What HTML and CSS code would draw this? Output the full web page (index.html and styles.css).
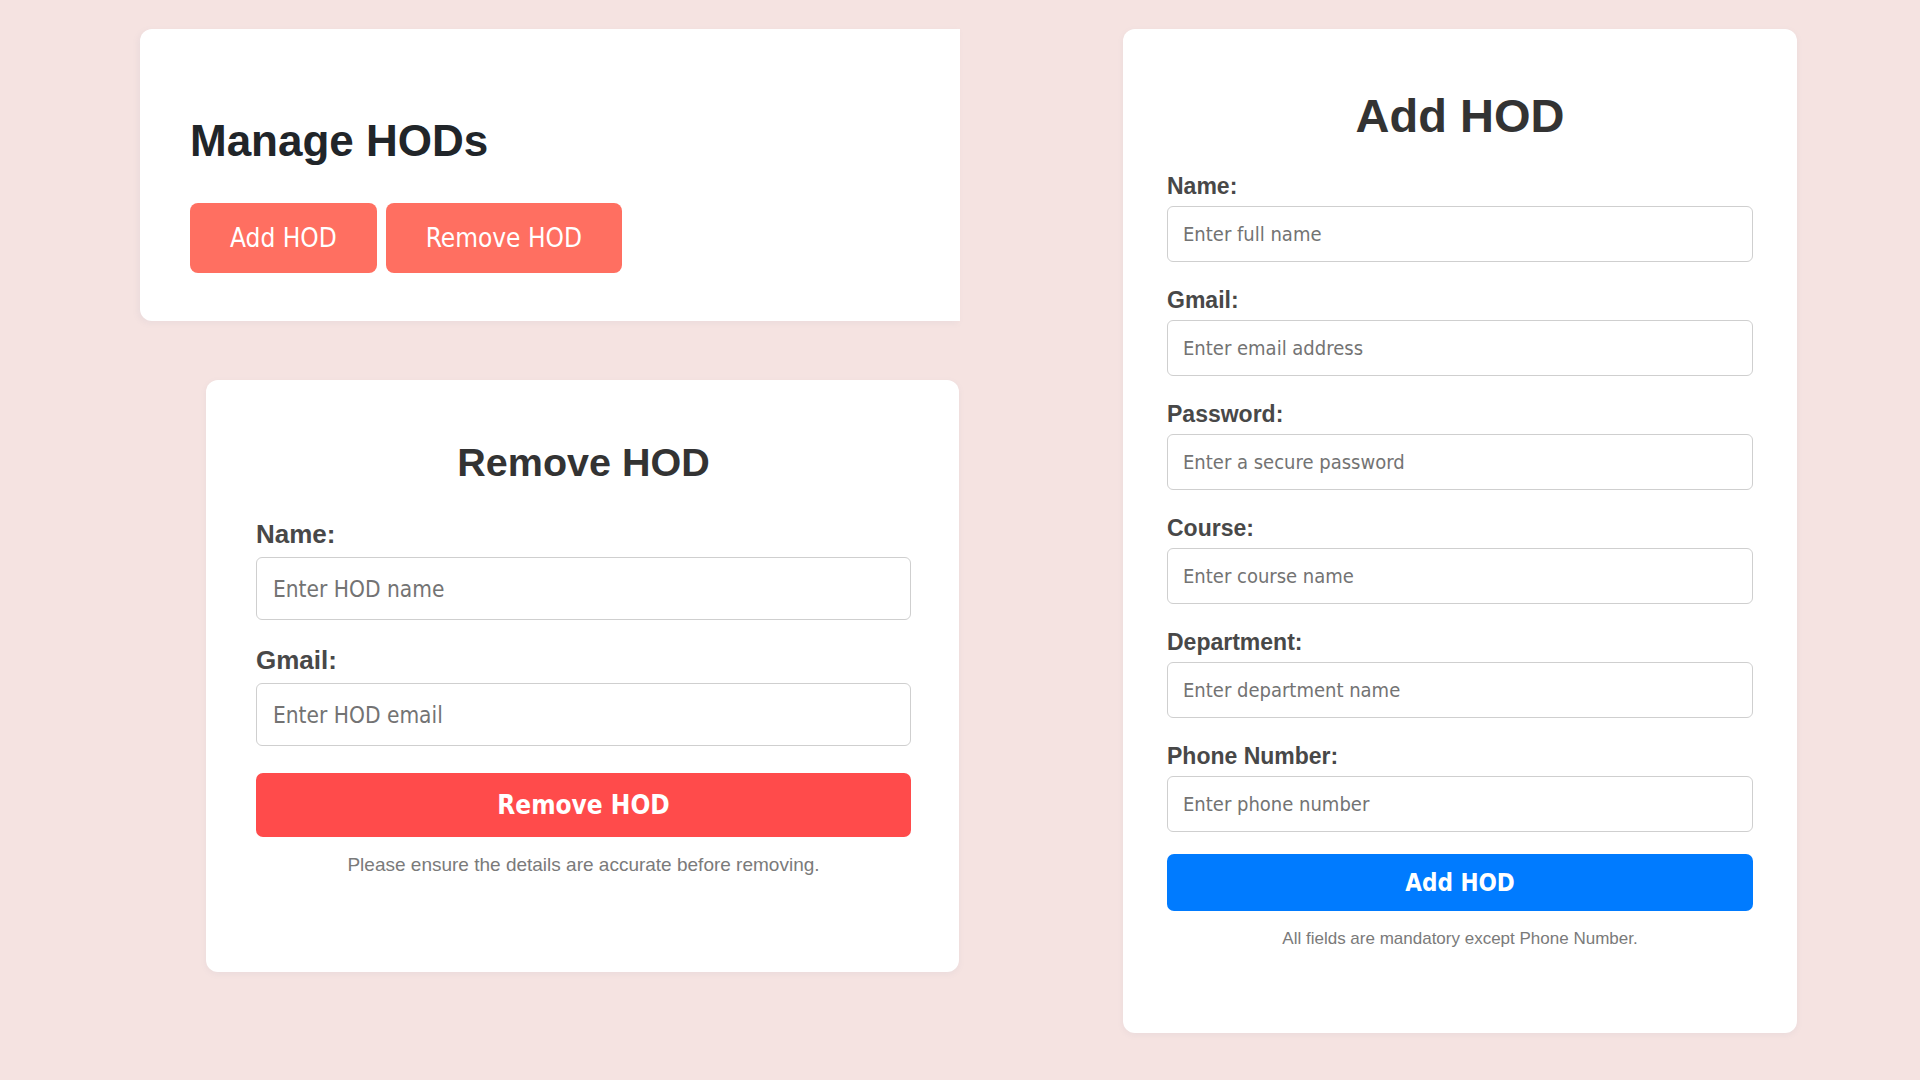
FILE: index.html
```html
<!DOCTYPE html>
<html lang="en">
<head>
<meta charset="utf-8">
<title>Manage HODs</title>
<link rel="stylesheet" href="styles.css">
</head>
<body>
<div class="page">
  <div class="left-col">
    <section class="manage-card">
      <h1 class="manage-title">Manage HODs</h1>
      <div class="manage-actions">
        <button class="tab-btn" type="button">Add HOD</button>
        <button class="tab-btn" type="button">Remove HOD</button>
      </div>
    </section>

    <section class="remove-card">
      <h2 class="remove-title">Remove HOD</h2>
      <form class="form">
        <label class="r-label">Name:</label>
        <input class="r-input" type="text" placeholder="Enter HOD name">
        <label class="r-label r-gap">Gmail:</label>
        <input class="r-input" type="email" placeholder="Enter HOD email">
        <button class="r-submit" type="button">Remove HOD</button>
        <p class="r-note">Please ensure the details are accurate before removing.</p>
      </form>
    </section>
  </div>

  <section class="add-card">
    <h2 class="add-title">Add HOD</h2>
    <form class="form">
      <label class="a-label">Name:</label>
      <input class="a-input" type="text" placeholder="Enter full name">
      <label class="a-label a-gap">Gmail:</label>
      <input class="a-input" type="email" placeholder="Enter email address">
      <label class="a-label a-gap">Password:</label>
      <input class="a-input" type="password" placeholder="Enter a secure password">
      <label class="a-label a-gap">Course:</label>
      <input class="a-input" type="text" placeholder="Enter course name">
      <label class="a-label a-gap">Department:</label>
      <input class="a-input" type="text" placeholder="Enter department name">
      <label class="a-label a-gap">Phone Number:</label>
      <input class="a-input" type="tel" placeholder="Enter phone number">
      <button class="a-submit" type="button">Add HOD</button>
      <p class="a-note">All fields are mandatory except Phone Number.</p>
    </form>
  </section>
</div>
</body>
</html>
```

FILE: styles.css
```css
* {
  box-sizing: border-box;
}

html, body {
  margin: 0;
  padding: 0;
}

body {
  background: #f5e3e1;
  font-family: "Liberation Sans", Arial, sans-serif;
  width: 1920px;
  height: 1080px;
  overflow: hidden;
}

.page {
  display: flex;
  align-items: flex-start;
  padding: 29px 0 0 140px;
}

.left-col {
  width: 820px;
  display: flex;
  flex-direction: column;
}

/* Manage card */
.manage-card {
  background: #ffffff;
  border-radius: 12px 0 0 12px;
  padding: 87px 50px 48px 50px;
  box-shadow: -2px 2px 6px rgba(120, 130, 160, 0.08);
}

.manage-title {
  margin: 0;
  font-size: 44px;
  line-height: 50px;
  font-weight: 700;
  color: #212529;
}

.manage-actions {
  display: flex;
  gap: 9px;
  margin-top: 37px;
}

.tab-btn {
  height: 70px;
  padding: 0 40px;
  border: none;
  border-radius: 8px;
  background: #ff6f61;
  color: #ffffff;
  font-family: "DejaVu Sans Condensed", "DejaVu Sans", sans-serif;
  font-stretch: condensed;
  font-size: 26px;
  line-height: 30px;
}

/* Remove card */
.remove-card {
  margin: 59px 1px 0 66px;
  background: #ffffff;
  border-radius: 12px;
  padding: 59px 48px 96px 50px;
  box-shadow: 0 2px 6px rgba(120, 130, 160, 0.08);
}

.remove-title {
  margin: 0 0 35px;
  text-align: center;
  font-size: 39.5px;
  line-height: 46px;
  font-weight: 700;
  color: #333333;
}

.form {
  display: flex;
  flex-direction: column;
  margin: 0;
}

.r-label {
  display: block;
  font-size: 26px;
  line-height: 28px;
  font-weight: 700;
  color: #484848;
  margin-bottom: 9px;
}

.r-gap {
  margin-top: 26px;
}

.r-input,
.a-input {
  display: block;
  width: 100%;
  border: 1px solid #cfcfcf;
  border-radius: 6px;
  background: #ffffff;
  font-family: "DejaVu Sans Condensed", "DejaVu Sans", sans-serif;
  font-stretch: condensed;
  color: #333333;
  outline: none;
}

.r-input {
  height: 63px;
  padding: 0 16px;
  font-size: 22.5px;
}

.r-input::placeholder,
.a-input::placeholder {
  color: #737373;
}

.r-submit {
  margin-top: 27px;
  height: 64px;
  border: none;
  border-radius: 7px;
  background: #ff4b4b;
  color: #ffffff;
  font-family: "DejaVu Sans Condensed", "DejaVu Sans", sans-serif;
  font-stretch: condensed;
  font-weight: 700;
  font-size: 26px;
}

.r-note {
  margin: 17px 0 0;
  text-align: center;
  font-size: 19px;
  line-height: 22px;
  color: #7a7a7a;
}

/* Add card */
.add-card {
  margin-left: 163px;
  width: 674px;
  height: 1004px;
  background: #ffffff;
  border-radius: 12px;
  padding: 60px 44px 0 44px;
  box-shadow: 0 2px 6px rgba(120, 130, 160, 0.08);
}

.add-title {
  margin: 0 0 30px;
  text-align: center;
  font-size: 47px;
  line-height: 54px;
  font-weight: 700;
  color: #333333;
}

.a-label {
  display: block;
  font-size: 23px;
  line-height: 26px;
  font-weight: 700;
  color: #484848;
  margin-bottom: 7px;
}

.a-gap {
  margin-top: 25px;
}

.a-input {
  height: 56px;
  padding: 0 15px;
  font-size: 20px;
}

.a-submit {
  margin-top: 22px;
  height: 57px;
  border: none;
  border-radius: 7px;
  background: #007bff;
  color: #ffffff;
  font-family: "DejaVu Sans Condensed", "DejaVu Sans", sans-serif;
  font-stretch: condensed;
  font-weight: 700;
  font-size: 24px;
}

.a-note {
  margin: 18px 0 0;
  text-align: center;
  font-size: 17px;
  line-height: 20px;
  color: #7a7a7a;
}
```
